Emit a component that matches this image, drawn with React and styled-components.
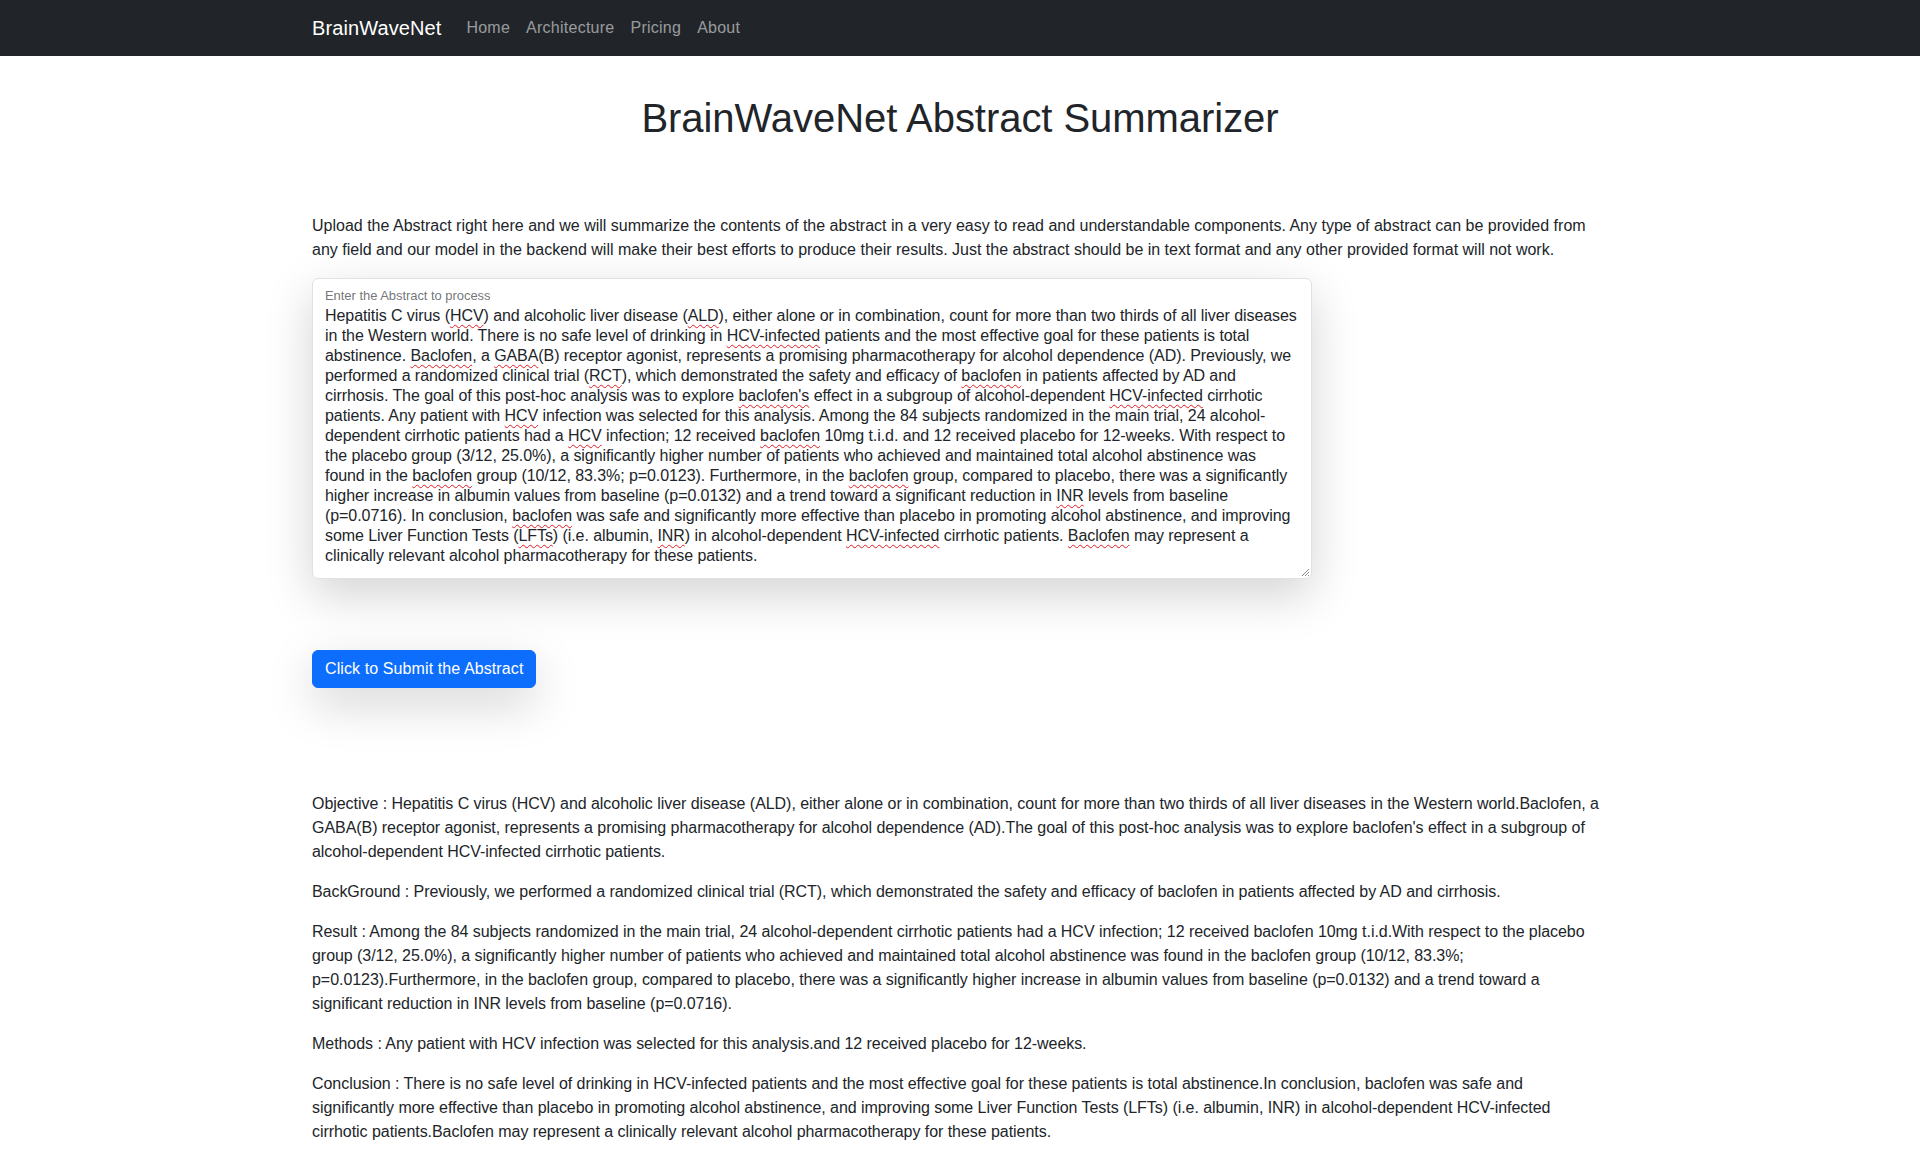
import React from 'react';
import styled, { createGlobalStyle } from 'styled-components';

const GlobalStyle = createGlobalStyle`
  html, body {
    margin: 0;
    padding: 0;
    background: #fff;
  }
  body {
    font-family: "Liberation Sans", Arial, sans-serif;
    font-size: 16px;
    line-height: 1.5;
    color: #212529;
    letter-spacing: -0.05px;
  }
  * { box-sizing: border-box; }
`;

const NavBar = styled.nav`
  background: #212529;
  height: 56px;
  display: flex;
  align-items: center;
`;

const Container = styled.div`
  width: 1320px;
  margin: 0 auto;
  padding: 0 12px;
`;

const NavInner = styled(Container)`
  display: flex;
  align-items: center;
`;

const Brand = styled.a`
  color: #fff;
  font-size: 20px;
  letter-spacing: 0.1px;
  margin-right: 17px;
  text-decoration: none;
`;

const NavLink = styled.a`
  color: rgba(255, 255, 255, 0.55);
  padding: 8px;
  letter-spacing: 0.25px;
  text-decoration: none;
`;

const Title = styled.h1`
  font-size: 40px;
  font-weight: 400;
  text-align: center;
  margin: 0;
  padding-top: 38px;
  line-height: 1.2;
`;

const Intro = styled.p`
  margin: 72px 0 16px;
  letter-spacing: 0;
`;

const AbstractBox = styled.div`
  position: relative;
  width: 1000px;
  border: 1px solid #dee2e6;
  border-radius: 6px;
  background: #fff;
  padding: 9px 12px 12px;
  box-shadow: 0 1rem 3rem rgba(0, 0, 0, 0.175);
`;

const FloatLabel = styled.div`
  font-size: 13px;
  line-height: 16px;
  color: rgba(33, 37, 41, 0.65);
  margin-bottom: 2px;
`;

const AbstractLine = styled.div`
  font-size: 16px;
  line-height: 20px;
  white-space: nowrap;
  letter-spacing: -0.07px;
`;

const Misspelt = styled.span`
  text-decoration: underline wavy #e01b24;
  text-decoration-thickness: 1px;
  text-underline-offset: 3px;
`;

const Grip = styled.svg`
  position: absolute;
  right: 1px;
  bottom: 1px;
`;

const SubmitButton = styled.button`
  margin-top: 71px;
  background: #0d6efd;
  color: #fff;
  border: 1px solid #0d6efd;
  border-radius: 6px;
  font: inherit;
  letter-spacing: 0.1px;
  padding: 6px 12px;
  line-height: 24px;
  box-shadow: 0 1rem 3rem rgba(0, 0, 0, 0.175);
  cursor: pointer;
`;

const Results = styled.div`
  margin-top: 104px;
`;

const ResultPara = styled.p`
  margin: 0 0 16px;
`;

const abstractLines = [
  'Hepatitis C virus (~HCV~) and alcoholic liver disease (~ALD~), either alone or in combination, count for more than two thirds of all liver diseases',
  'in the Western world. There is no safe level of drinking in ~HCV-infected~ patients and the most effective goal for these patients is total',
  'abstinence. ~Baclofen~, a ~GABA~(B) receptor agonist, represents a promising pharmacotherapy for alcohol dependence (AD). Previously, we',
  'performed a randomized clinical trial (~RCT~), which demonstrated the safety and efficacy of ~baclofen~ in patients affected by AD and',
  "cirrhosis. The goal of this post-hoc analysis was to explore ~baclofen's~ effect in a subgroup of alcohol-dependent ~HCV-infected~ cirrhotic",
  'patients. Any patient with ~HCV~ infection was selected for this analysis. Among the 84 subjects randomized in the main trial, 24 alcohol-',
  'dependent cirrhotic patients had a ~HCV~ infection; 12 received ~baclofen~ 10mg t.i.d. and 12 received placebo for 12-weeks. With respect to',
  'the placebo group (3/12, 25.0%), a significantly higher number of patients who achieved and maintained total alcohol abstinence was',
  'found in the ~baclofen~ group (10/12, 83.3%; p=0.0123). Furthermore, in the ~baclofen~ group, compared to placebo, there was a significantly',
  'higher increase in albumin values from baseline (p=0.0132) and a trend toward a significant reduction in ~INR~ levels from baseline',
  '(p=0.0716). In conclusion, ~baclofen~ was safe and significantly more effective than placebo in promoting alcohol abstinence, and improving',
  'some Liver Function Tests (~LFTs~) (i.e. albumin, ~INR~) in alcohol-dependent ~HCV-infected~ cirrhotic patients. ~Baclofen~ may represent a',
  'clinically relevant alcohol pharmacotherapy for these patients.',
];

const summary = [
  ['Objective', "Hepatitis C virus (HCV) and alcoholic liver disease (ALD), either alone or in combination, count for more than two thirds of all liver diseases in the Western world.Baclofen, a GABA(B) receptor agonist, represents a promising pharmacotherapy for alcohol dependence (AD).The goal of this post-hoc analysis was to explore baclofen's effect in a subgroup of alcohol-dependent HCV-infected cirrhotic patients."],
  ['BackGround', 'Previously, we performed a randomized clinical trial (RCT), which demonstrated the safety and efficacy of baclofen in patients affected by AD and cirrhosis.'],
  ['Result', 'Among the 84 subjects randomized in the main trial, 24 alcohol-dependent cirrhotic patients had a HCV infection; 12 received baclofen 10mg t.i.d.With respect to the placebo group (3/12, 25.0%), a significantly higher number of patients who achieved and maintained total alcohol abstinence was found in the baclofen group (10/12, 83.3%; p=0.0123).Furthermore, in the baclofen group, compared to placebo, there was a significantly higher increase in albumin values from baseline (p=0.0132) and a trend toward a significant reduction in INR levels from baseline (p=0.0716).'],
  ['Methods', 'Any patient with HCV infection was selected for this analysis.and 12 received placebo for 12-weeks.'],
  ['Conclusion', 'There is no safe level of drinking in HCV-infected patients and the most effective goal for these patients is total abstinence.In conclusion, baclofen was safe and significantly more effective than placebo in promoting alcohol abstinence, and improving some Liver Function Tests (LFTs) (i.e. albumin, INR) in alcohol-dependent HCV-infected cirrhotic patients.Baclofen may represent a clinically relevant alcohol pharmacotherapy for these patients.'],
];

const renderLine = line =>
  line.split('~').map((part, i) => (i % 2 ? <Misspelt key={i}>{part}</Misspelt> : part));

export default function App() {
  return (
    <>
      <GlobalStyle />
      <NavBar>
        <NavInner>
          <Brand href="#">BrainWaveNet</Brand>
          <NavLink href="#">Home</NavLink>
          <NavLink href="#">Architecture</NavLink>
          <NavLink href="#">Pricing</NavLink>
          <NavLink href="#">About</NavLink>
        </NavInner>
      </NavBar>
      <Container>
        <Title>BrainWaveNet Abstract Summarizer</Title>
        <Intro>
          Upload the Abstract right here and we will summarize the contents of the abstract in a very easy to read and
          understandable components. Any type of abstract can be provided from any field and our model in the backend
          will make their best efforts to produce their results. Just the abstract should be in text format and any other
          provided format will not work.
        </Intro>
        <AbstractBox role="textbox">
          <FloatLabel>Enter the Abstract to process</FloatLabel>
          {abstractLines.map((line, i) => (
            <AbstractLine key={i}>{renderLine(line)}</AbstractLine>
          ))}
          <Grip width="10" height="10" viewBox="0 0 10 10">
            <path d="M9 2 L2 9 M9 5 L5 9 M9 8 L8 9" stroke="#8a8a8a" strokeWidth="1" />
          </Grip>
        </AbstractBox>
        <SubmitButton>Click to Submit the Abstract</SubmitButton>
        <Results>
          {summary.map(([label, text]) => (
            <ResultPara key={label}>{`${label} : ${text}`}</ResultPara>
          ))}
        </Results>
      </Container>
    </>
  );
}
